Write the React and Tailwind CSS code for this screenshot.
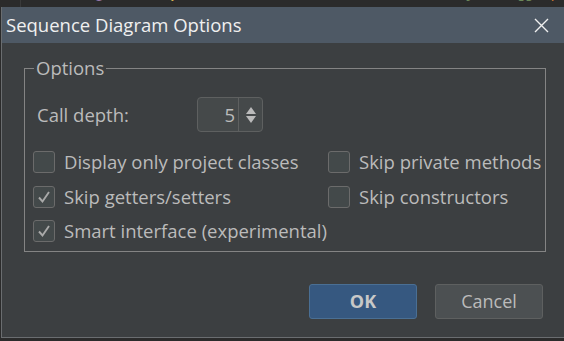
import React from "react";

function CheckBox({ checked }) {
  return (
    <span className="flex h-[22px] w-[22px] shrink-0 items-center justify-center rounded-[3px] border border-[#6b6b6b] bg-[#43494a]">
      {checked && (
        <svg width="16" height="16" viewBox="0 0 16 16">
          <path d="M3 8.5 L6.5 12.5 L13 3" fill="none" stroke="#a9a9a9" strokeWidth="1.9" />
        </svg>
      )}
    </span>
  );
}

function Option({ label, checked }) {
  return (
    <label className="flex h-[22px] items-center gap-[9px] whitespace-nowrap leading-[22px]">
      <CheckBox checked={checked} />
      <span>{label}</span>
    </label>
  );
}

export default function App() {
  return (
    <div
      className="relative h-[341px] w-[564px] overflow-hidden bg-[#2b2b2b] text-[#bbbbbb]"
      style={{ fontFamily: '"Open Sans", "Noto Sans", sans-serif' }}
    >
      {/* editor behind the dialog */}
      <div className="flex h-[7px] overflow-hidden">
        <div className="w-[21px] shrink-0 border-r border-[#3a3a3a]" />
        <div
          className="ml-[48px] mt-[-21px] whitespace-pre text-[20px] leading-[26px]"
          style={{ fontFamily: '"Liberation Mono", monospace' }}
        >
          <span className="text-[#9876aa]">log</span>
          <span className="text-[#a9b7c6]">.info</span>
          <span className="text-[#d5b252]">(</span>
          <span className="text-[#6a8759]">"TestDataService.selectById:{"{}"}"</span>
          <span className="text-[#cc7832]">,</span>
        </div>
      </div>

      {/* dialog */}
      <div className="ml-px h-[331px] border-b border-l border-[#6a6d70] bg-[#3c3f41]">
        <div className="flex h-[36px] items-center justify-between bg-[#4e5965] pl-[4px] pr-[15px]">
          <span className="text-[18.5px] leading-[24px] text-[#f0f0f0]">Sequence Diagram Options</span>
          <svg width="15" height="15" viewBox="0 0 15 15">
            <path d="M1 1 L14 14 M14 1 L1 14" stroke="#f0f0f0" strokeWidth="1.4" />
          </svg>
        </div>

        <div className="pl-[22px] pt-[15px] text-[18.5px]">
          <fieldset className="h-[194px] w-[522px] min-w-0 border border-[#848484] pl-[8px] pr-[2px]">
            <legend className="ml-[1px] px-[2px] leading-[20px]">Options</legend>
            <div className="mt-[19px] flex items-center">
              <span className="ml-[4px] w-[160px]">Call depth:</span>
              <div className="flex h-[35px] w-[66px] items-center rounded-[4px] border border-[#5e6060] bg-[#45494a]">
                <span className="flex-1 pr-[3px] text-right">5</span>
                <div className="flex h-full w-[24px] flex-col items-center justify-center gap-[2px] border-l border-[#5e6060]">
                  <svg width="10" height="7" viewBox="0 0 10 7">
                    <path d="M5 0 L10 7 L0 7 Z" fill="#bbbbbb" />
                  </svg>
                  <svg width="10" height="7" viewBox="0 0 10 7">
                    <path d="M0 0 L10 0 L5 7 Z" fill="#bbbbbb" />
                  </svg>
                </div>
              </div>
            </div>
            <div className="mt-[19px] grid grid-cols-[295px_1fr] gap-y-[12.5px]">
              <Option label="Display only project classes" />
              <Option label="Skip private methods" />
              <Option label="Skip getters/setters" checked />
              <Option label="Skip constructors" />
              <Option label="Smart interface (experimental)" checked />
            </div>
          </fieldset>

          <div className="mt-[32px] flex w-[519px] justify-end gap-[18px]">
            <button className="h-[35px] w-[108px] rounded-[3px] border border-[#4a6f94] bg-[#365880] text-[18px] font-bold text-[#c8c8c8]">
              OK
            </button>
            <button className="h-[35px] w-[108px] rounded-[3px] border border-[#5e6060] bg-[#4c5052] text-[18px] text-[#bbbbbb]">
              Cancel
            </button>
          </div>
        </div>
      </div>
    </div>
  );
}
